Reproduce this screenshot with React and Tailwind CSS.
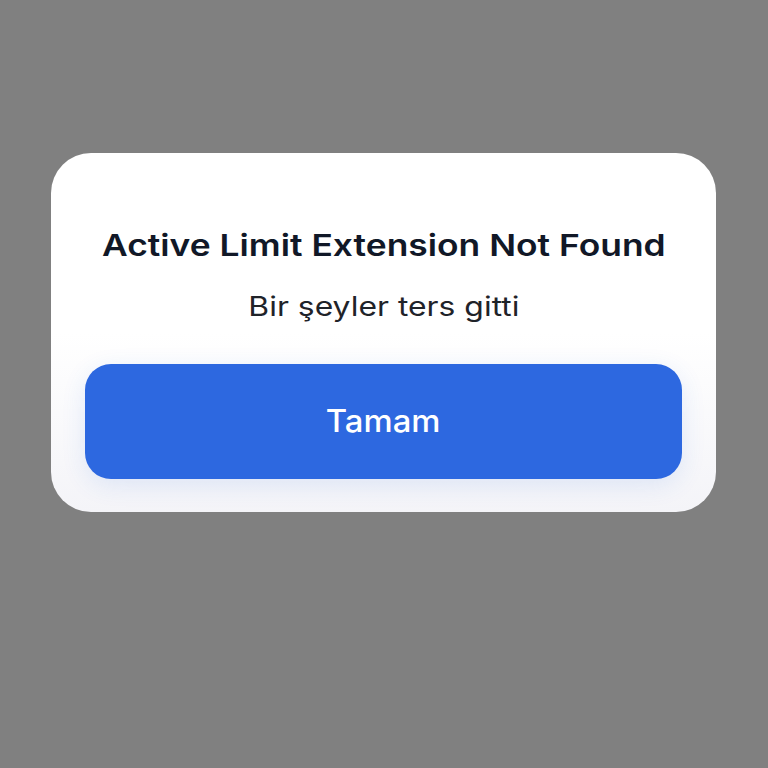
export default function App() {
  return (
    <div
      className="w-[768px] h-[768px] bg-[#808080] pl-[51px] pt-[153px]"
      style={{ fontFamily: 'Inter, "Noto Sans", sans-serif' }}
    >
      {/* dialog card */}
      <div className="w-[665px] h-[359px] rounded-[40px] bg-gradient-to-b from-white via-white to-[#f4f4f8] flex flex-col items-center px-[34px] pt-[70px]">
        <h2 className="text-[30px] leading-[44px] font-semibold text-[#111827] scale-x-[1.18]">
          Active Limit Extension Not Found
        </h2>
        <p className="mt-[22px] text-[27px] leading-[36px] text-[#1f2329] scale-x-[1.18]">
          Bir şeyler ters gitti
        </p>
        <button className="mt-[39px] w-full h-[115px] rounded-[26px] bg-[#2d68e0] text-white shadow-[0_6px_24px_rgba(45,104,224,0.12)]">
          <span className="inline-block text-[31px] font-medium scale-x-[1.06]">Tamam</span>
        </button>
      </div>
    </div>
  )
}
